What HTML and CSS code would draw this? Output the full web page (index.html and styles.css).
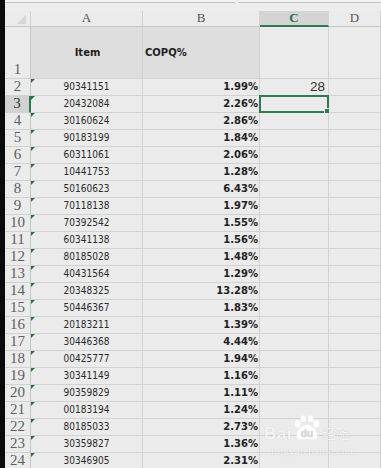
FILE: index.html
```html
<!DOCTYPE html>
<html lang="zh">
<head>
    <meta charset="UTF-8">
    <meta name="viewport" content="width=device-width, initial-scale=1.0">
    <title>COPQ</title>
    <link rel="stylesheet" href="styles.css">
</head>
<body>
    <div class="toolbar">
        <span class="tb-box tb-left"></span>
        <span class="tb-box tb-right"></span>
    </div>

    <div class="sheet">
        <!-- cabecera de columnas -->
        <div class="c corner"><span class="corner-mark"></span></div>
        <div class="c colhead">A</div>
        <div class="c colhead">B</div>
        <div class="c colhead active">C</div>
        <div class="c colhead">D</div>

        <!-- fila 1: títulos -->
        <div class="c rowhead tall">1</div>
        <div class="c title center">Item</div>
        <div class="c title">COPQ%</div>
        <div class="c"></div>
        <div class="c"></div>

        <div class="c rowhead">2</div><div class="c a">90341151</div><div class="c b">1.99%</div><div class="c num">28</div><div class="c"></div>
        <div class="c rowhead active">3</div><div class="c a">20432084</div><div class="c b">2.26%</div><div class="c selected"><span class="handle"></span></div><div class="c"></div>
        <div class="c rowhead">4</div><div class="c a">30160624</div><div class="c b">2.86%</div><div class="c"></div><div class="c"></div>
        <div class="c rowhead">5</div><div class="c a">90183199</div><div class="c b">1.84%</div><div class="c"></div><div class="c"></div>
        <div class="c rowhead">6</div><div class="c a">60311061</div><div class="c b">2.06%</div><div class="c"></div><div class="c"></div>
        <div class="c rowhead">7</div><div class="c a">10441753</div><div class="c b">1.28%</div><div class="c"></div><div class="c"></div>
        <div class="c rowhead">8</div><div class="c a">50160623</div><div class="c b">6.43%</div><div class="c"></div><div class="c"></div>
        <div class="c rowhead">9</div><div class="c a">70118138</div><div class="c b">1.97%</div><div class="c"></div><div class="c"></div>
        <div class="c rowhead">10</div><div class="c a">70392542</div><div class="c b">1.55%</div><div class="c"></div><div class="c"></div>
        <div class="c rowhead">11</div><div class="c a">60341138</div><div class="c b">1.56%</div><div class="c"></div><div class="c"></div>
        <div class="c rowhead">12</div><div class="c a">80185028</div><div class="c b">1.48%</div><div class="c"></div><div class="c"></div>
        <div class="c rowhead">13</div><div class="c a">40431564</div><div class="c b">1.29%</div><div class="c"></div><div class="c"></div>
        <div class="c rowhead">14</div><div class="c a">20348325</div><div class="c b">13.28%</div><div class="c"></div><div class="c"></div>
        <div class="c rowhead">15</div><div class="c a">50446367</div><div class="c b">1.83%</div><div class="c"></div><div class="c"></div>
        <div class="c rowhead">16</div><div class="c a">20183211</div><div class="c b">1.39%</div><div class="c"></div><div class="c"></div>
        <div class="c rowhead">17</div><div class="c a">30446368</div><div class="c b">4.44%</div><div class="c"></div><div class="c"></div>
        <div class="c rowhead">18</div><div class="c a">00425777</div><div class="c b">1.94%</div><div class="c"></div><div class="c"></div>
        <div class="c rowhead">19</div><div class="c a">30341149</div><div class="c b">1.16%</div><div class="c"></div><div class="c"></div>
        <div class="c rowhead">20</div><div class="c a">90359829</div><div class="c b">1.11%</div><div class="c"></div><div class="c"></div>
        <div class="c rowhead">21</div><div class="c a">00183194</div><div class="c b">1.24%</div><div class="c"></div><div class="c"></div>
        <div class="c rowhead">22</div><div class="c a">80185033</div><div class="c b">2.73%</div><div class="c"></div><div class="c"></div>
        <div class="c rowhead">23</div><div class="c a">30359827</div><div class="c b">1.36%</div><div class="c"></div><div class="c"></div>
        <div class="c rowhead">24</div><div class="c a">30346905</div><div class="c b">2.31%</div><div class="c"></div><div class="c"></div>
    </div>

    <!-- marca de agua -->
    <div class="watermark">
        <div class="wm-logo">
            <span class="wm-bai">Bai</span>
            <svg class="wm-paw" width="28" height="27" viewBox="0 0 30 28">
                <ellipse cx="5" cy="9" rx="3.2" ry="4" />
                <ellipse cx="11" cy="3.6" rx="3.2" ry="3.6" />
                <ellipse cx="19" cy="3.6" rx="3.2" ry="3.6" />
                <ellipse cx="25" cy="9" rx="3.2" ry="4" />
                <path d="M15 10 C 21 10 27 18 26 23 C 25 27 19 26 15 25 C 11 26 5 27 4 23 C 3 18 9 10 15 10 Z" />
                <text x="15" y="23" text-anchor="middle" class="wm-du">du</text>
            </svg>
            <span class="wm-cn">经验</span>
        </div>
        <div class="wm-url">jingyan.baidu.com</div>
    </div>
</body>
</html>
```

FILE: styles.css
```css
/* Hoja de cálculo básica */
body {
    margin: 0;
    border-left: 5px solid #0b0b0b;
    background: #ececec;
    font-family: "DejaVu Sans Condensed", "Liberation Sans", sans-serif;
    overflow: hidden;
    height: 468px;
    position: relative;
}

/* Barra superior */
.toolbar {
    height: 11px;
    display: flex;
    gap: 3px;
    background: #ededed;
}

.tb-box {
    height: 2px;
    border-bottom: 1px solid #c2c2c2;
    background: #f2f2f2;
}

.tb-left { width: 230px; }
.tb-right { flex: 1; }

/* Rejilla */
.sheet {
    display: grid;
    grid-template-columns: 26px 112px 117px 69px 1fr;
    grid-template-rows: 16px 52px repeat(23, 17px);
}

.c {
    box-sizing: border-box;
    border-right: 1px solid #d2d2d2;
    border-bottom: 1px solid #d2d2d2;
    background: #ebebeb;
    display: flex;
    align-items: center;
    font-size: 10px;
    line-height: 12px;
    color: #222;
    position: relative;
}

/* Cabeceras */
.corner {
    border-bottom-color: #c6c6c6;
}

.corner-mark {
    position: absolute;
    right: 4px;
    bottom: 2px;
    width: 0;
    height: 0;
    border-left: 9px solid transparent;
    border-bottom: 9px solid #d6d6d6;
}

.colhead {
    justify-content: center;
    align-items: flex-end;
    font-family: "Liberation Serif", serif;
    font-size: 13px;
    line-height: 14px;
    color: #555;
    border-bottom-color: #c6c6c6;
    padding-bottom: 1px;
}

.colhead.active {
    background: #d4d4d4;
    color: #2b6e47;
    font-weight: bold;
    border-bottom: 2px solid #2f7a4f;
    padding-bottom: 0;
}

.rowhead {
    justify-content: center;
    align-items: flex-end;
    font-family: "Liberation Serif", serif;
    font-size: 15px;
    line-height: 15px;
    color: #5f5f5f;
    border-right-color: #c6c6c6;
    padding-bottom: 1px;
}

.rowhead.active {
    background: #d2d2d2;
    color: #333;
    border-right: 2px solid #2f7a4f;
}

/* Fila de títulos */
.title {
    background: #dedede;
    font-family: "DejaVu Sans", sans-serif;
    font-weight: bold;
    padding-left: 2px;
}

.title.center {
    justify-content: center;
}

/* Datos */
.a {
    justify-content: center;
    color: #2a2a2a;
}

.a::before {
    content: '';
    position: absolute;
    left: 0;
    top: 0;
    border-top: 4px solid #1f7a23;
    border-right: 4px solid transparent;
}

.b {
    justify-content: flex-end;
    font-family: "DejaVu Sans", sans-serif;
    font-weight: bold;
    padding-right: 1px;
}

.num {
    justify-content: flex-end;
    font-family: "Liberation Sans", sans-serif;
    font-size: 13.5px;
    color: #333;
    padding-right: 3px;
}

/* Celda activa */
.selected {
    border: 2px solid #2f7a4f;
    margin: -1px 0 0 -1px;
}

.handle {
    position: absolute;
    right: -4px;
    bottom: -4px;
    width: 5px;
    height: 5px;
    background: #2f7a4f;
    border: 1px solid #ebebeb;
}

/* Marca de agua */
.watermark {
    position: absolute;
    left: 259px;
    top: 413px;
    color: rgba(255, 255, 255, 0.85);
    text-shadow: 0 0 1px rgba(0, 0, 0, 0.2);
}

.wm-logo {
    display: flex;
    align-items: flex-end;
    height: 29px;
}

.wm-bai {
    font-family: "Liberation Sans", sans-serif;
    font-weight: bold;
    font-size: 17px;
    line-height: 16px;
    letter-spacing: 0.5px;
}

.wm-paw {
    fill: rgba(255, 255, 255, 0.88);
    margin: 0 1px;
}

.wm-du {
    fill: #dadada;
    font-family: "Liberation Sans", sans-serif;
    font-weight: bold;
    font-size: 11px;
}

.wm-cn {
    font-family: "Noto Sans CJK SC", sans-serif;
    font-size: 14px;
    line-height: 17px;
}

.wm-url {
    font-family: "Liberation Serif", serif;
    font-size: 11px;
    letter-spacing: 0.2px;
    padding-left: 7px;
    margin-top: 3px;
}
```
